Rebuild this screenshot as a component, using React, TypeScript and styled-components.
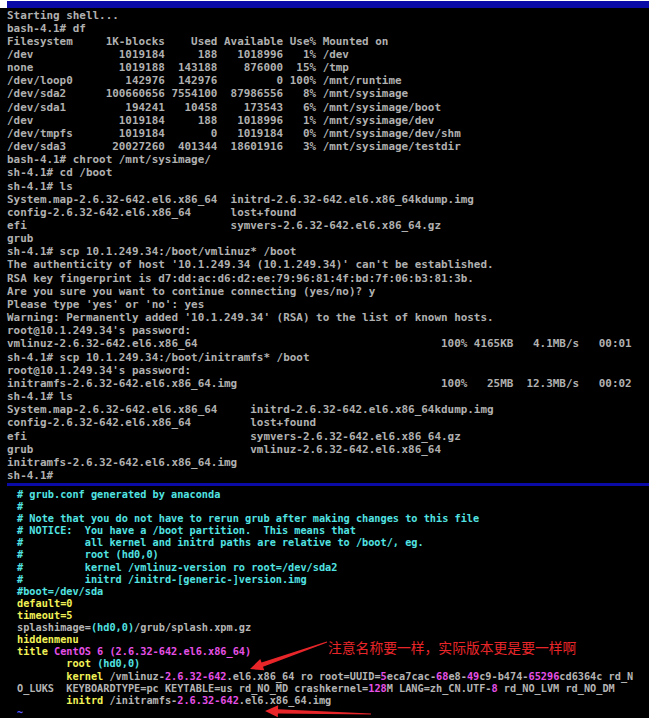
import React from 'react'
import styled, { createGlobalStyle } from 'styled-components'

const GlobalStyle = createGlobalStyle`
  html, body {
    margin: 0;
    padding: 0;
    background: #000;
  }
`

const pad = (s: string, n: number) => s.padEnd(n, ' ')
const lpad = (s: string, n: number) => s.padStart(n, ' ')

const dfRow = (fs: string, blocks: string, used: string, avail: string, use: string, mnt: string) =>
  pad(fs, 15) + lpad(blocks, 9) + ' ' + lpad(used, 7) + ' ' + lpad(avail, 9) + ' ' + lpad(use, 4) + ' ' + mnt

const shellLines: string[] = [
  'Starting shell...',
  'bash-4.1# df',
  dfRow('Filesystem', '1K-blocks', 'Used', 'Available', 'Use%', 'Mounted on'),
  dfRow('/dev', '1019184', '188', '1018996', '1%', '/dev'),
  dfRow('none', '1019188', '143188', '876000', '15%', '/tmp'),
  dfRow('/dev/loop0', '142976', '142976', '0', '100%', '/mnt/runtime'),
  dfRow('/dev/sda2', '100660656', '7554100', '87986556', '8%', '/mnt/sysimage'),
  dfRow('/dev/sda1', '194241', '10458', '173543', '6%', '/mnt/sysimage/boot'),
  dfRow('/dev', '1019184', '188', '1018996', '1%', '/mnt/sysimage/dev'),
  dfRow('/dev/tmpfs', '1019184', '0', '1019184', '0%', '/mnt/sysimage/dev/shm'),
  dfRow('/dev/sda3', '20027260', '401344', '18601916', '3%', '/mnt/sysimage/testdir'),
  'bash-4.1# chroot /mnt/sysimage/',
  'sh-4.1# cd /boot',
  'sh-4.1# ls',
  pad('System.map-2.6.32-642.el6.x86_64', 34) + 'initrd-2.6.32-642.el6.x86_64kdump.img',
  pad('config-2.6.32-642.el6.x86_64', 34) + 'lost+found',
  pad('efi', 34) + 'symvers-2.6.32-642.el6.x86_64.gz',
  'grub',
  'sh-4.1# scp 10.1.249.34:/boot/vmlinuz* /boot',
  "The authenticity of host '10.1.249.34 (10.1.249.34)' can't be established.",
  'RSA key fingerprint is d7:dd:ac:d6:d2:ee:79:96:81:4f:bd:7f:06:b3:81:3b.',
  'Are you sure you want to continue connecting (yes/no)? y',
  "Please type 'yes' or 'no': yes",
  "Warning: Permanently added '10.1.249.34' (RSA) to the list of known hosts.",
  "root@10.1.249.34's password:",
  pad('vmlinuz-2.6.32-642.el6.x86_64', 66) + '100% 4165KB   4.1MB/s   00:01',
  'sh-4.1# scp 10.1.249.34:/boot/initramfs* /boot',
  "root@10.1.249.34's password:",
  pad('initramfs-2.6.32-642.el6.x86_64.img', 66) + '100%   25MB  12.3MB/s   00:02',
  'sh-4.1# ls',
  pad('System.map-2.6.32-642.el6.x86_64', 37) + 'initrd-2.6.32-642.el6.x86_64kdump.img',
  pad('config-2.6.32-642.el6.x86_64', 37) + 'lost+found',
  pad('efi', 37) + 'symvers-2.6.32-642.el6.x86_64.gz',
  pad('grub', 37) + 'vmlinuz-2.6.32-642.el6.x86_64',
  'initramfs-2.6.32-642.el6.x86_64.img',
  'sh-4.1#',
]

type Tone = 'c' | 'y' | 'm' | 'g' | 'b'

const tones: Record<Tone, string> = {
  c: '#52e3e3',
  y: '#f2f257',
  m: '#e650e6',
  g: '#b4b4b4',
  b: '#5a5aff',
}

const grubLines: [Tone, string][][] = [
  [['c', '# grub.conf generated by anaconda']],
  [['c', '#']],
  [['c', '# Note that you do not have to rerun grub after making changes to this file']],
  [['c', '# NOTICE:  You have a /boot partition.  This means that']],
  [['c', '#          all kernel and initrd paths are relative to /boot/, eg.']],
  [['c', '#          root (hd0,0)']],
  [['c', '#          kernel /vmlinuz-version ro root=/dev/sda2']],
  [['c', '#          initrd /initrd-[generic-]version.img']],
  [['c', '#boot=/dev/sda']],
  [['y', 'default=0']],
  [['y', 'timeout=5']],
  [['g', 'splashimage='], ['c', '(hd0,0)'], ['g', '/grub/splash.xpm.gz']],
  [['y', 'hiddenmenu']],
  [['y', 'title '], ['m', 'CentOS 6 (2.6.32-642.el6.x86_64)']],
  [['g', '        '], ['y', 'root'], ['g', ' '], ['c', '(hd0,0)']],
  [
    ['g', '        '], ['y', 'kernel'], ['g', ' /vmlinuz-'], ['m', '2.6.32-642'],
    ['g', '.el6.x86_64 ro root=UUID='], ['m', '5'], ['g', 'eca7cac-'], ['m', '68'],
    ['g', 'e8-'], ['m', '49'], ['g', 'c9-b474-'], ['m', '65296'], ['g', 'cd6364c rd_N'],
  ],
  [
    ['g', 'O_LUKS  KEYBOARDTYPE=pc KEYTABLE=us rd_NO_MD crashkernel='], ['m', '128'],
    ['g', 'M LANG=zh_CN.UTF-'], ['m', '8'], ['g', ' rd_NO_LVM rd_NO_DM'],
  ],
  [['g', '        '], ['y', 'initrd'], ['g', ' /initramfs-'], ['m', '2.6.32-642'], ['g', '.el6.x86_64.img']],
  [['b', '~']],
]

// tapered arrow like the ones screenshot tools draw: thin tail, wide head
function arrowPoints(tx: number, ty: number, px: number, py: number) {
  const dx = px - tx
  const dy = py - ty
  const len = Math.hypot(dx, dy)
  const ux = dx / len
  const uy = dy / len
  const nx = -uy
  const ny = ux
  const hx = px - 13 * ux
  const hy = py - 13 * uy
  const pts = [
    [tx + 0.5 * nx, ty + 0.5 * ny],
    [hx + 2.2 * nx, hy + 2.2 * ny],
    [hx + 6 * nx, hy + 6 * ny],
    [px, py],
    [hx - 6 * nx, hy - 6 * ny],
    [hx - 2.2 * nx, hy - 2.2 * ny],
    [tx - 0.5 * nx, ty - 0.5 * ny],
  ]
  return pts.map(p => p.map(v => v.toFixed(2)).join(',')).join(' ')
}

function App() {
  return (
    <Screen>
      <GlobalStyle />
      <TitleStrip>
        <TitleBar />
      </TitleStrip>
      <ShellPanel>
        {shellLines.map((l, i) => (
          <ShellLine key={i}>{l || ' '}</ShellLine>
        ))}
      </ShellPanel>
      <Divider />
      <GrubPanel>
        {grubLines.map((segs, i) => (
          <GrubLine key={i}>
            {segs.map(([t, s], j) => (
              <Tok key={j} $tone={t}>{s}</Tok>
            ))}
          </GrubLine>
        ))}
      </GrubPanel>
      <Note>注意名称要一样，实际版本更是要一样啊</Note>
      <Arrows width="649" height="718" viewBox="0 0 649 718">
        <polygon points={arrowPoints(327, 642, 250, 669)} fill="#e8262a" />
        <polygon points={arrowPoints(371, 714, 265, 711)} fill="#e8262a" />
      </Arrows>
    </Screen>
  )
}

export default App

const Screen = styled.div`
  position: relative;
  width: 649px;
  height: 718px;
  overflow: hidden;
  background: #000;
  display: flex;
  flex-direction: column;
`

const TitleStrip = styled.div`
  background: #fff;
  padding: 1px 0 0 7px;
`

const TitleBar = styled.div`
  height: 7px;
  background: #0a0aa6;
`

const ShellPanel = styled.div`
  padding: 0.5px 0 0 7px;
  height: 474.5px;
`

const ShellLine = styled.div`
  font-family: "DejaVu Sans Mono", "Liberation Mono", monospace;
  font-size: 10.93px;
  font-weight: bold;
  line-height: 13.17px;
  height: 13.17px;
  white-space: pre;
  color: #b0b0b0;
`

const Divider = styled.div`
  height: 3px;
  margin-left: 7px;
  background: #0a0aa6;
`

const GrubPanel = styled.div`
  padding: 2px 0 0 17px;
`

const GrubLine = styled.div`
  font-family: "DejaVu Sans Mono", "Liberation Mono", monospace;
  font-size: 10.24px;
  font-weight: bold;
  line-height: 12.12px;
  height: 12.12px;
  white-space: pre;
`

const Tok = styled.span<{ $tone: Tone }>`
  color: ${p => tones[p.$tone]};
`

const Note = styled.div`
  position: absolute;
  left: 328px;
  top: 639px;
  font-family: "Noto Sans CJK SC", sans-serif;
  font-size: 13.8px;
  line-height: 16px;
  color: #e8262a;
  white-space: nowrap;
`

const Arrows = styled.svg`
  position: absolute;
  left: 0;
  top: 0;
  pointer-events: none;
`
